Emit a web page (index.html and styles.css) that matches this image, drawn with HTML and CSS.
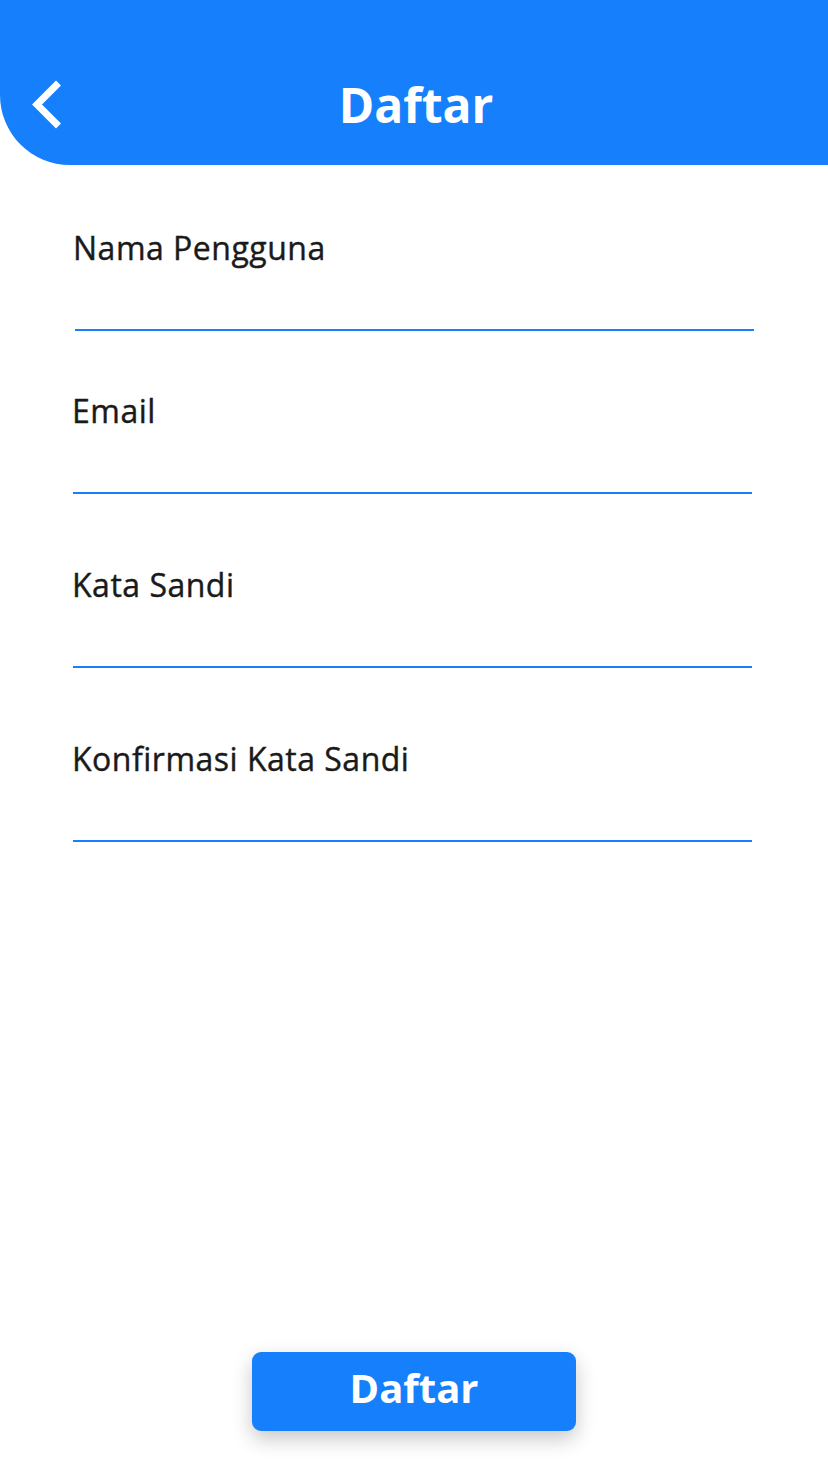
FILE: index.html
```html
<!DOCTYPE html>
<html lang="id">
<head>
<meta charset="utf-8">
<title>Daftar</title>
<link rel="stylesheet" href="styles.css">
</head>
<body>
<div class="screen">
  <header class="appbar">
    <button class="back" aria-label="Kembali">
      <svg width="34" height="52" viewBox="0 0 34 52"><path d="M28.5 4 L7 25.5 L28.5 47" fill="none" stroke="#fff" stroke-width="7" stroke-linecap="butt" stroke-linejoin="miter"/></svg>
    </button>
    <h1 class="title">Daftar</h1>
  </header>
  <form class="form">
    <label class="field first"><span class="label">Nama Pengguna</span><span class="line"></span></label>
    <label class="field second"><span class="label">Email</span><span class="line"></span></label>
    <label class="field"><span class="label">Kata Sandi</span><span class="line"></span></label>
    <label class="field"><span class="label">Konfirmasi Kata Sandi</span><span class="line"></span></label>
  </form>
  <div class="actions">
    <button class="submit" type="button">Daftar</button>
  </div>
</div>
</body>
</html>
```
FILE: styles.css
```css
html, body { margin: 0; padding: 0; background: #fff; }
body { font-family: "Open Sans", "Noto Sans", sans-serif; }
.screen { width: 828px; height: 1472px; display: flex; flex-direction: column; }
.appbar {
  height: 165px; background: #167FFC; border-bottom-left-radius: 70px;
  display: flex; align-items: center; justify-content: center; position: relative;
}
.back {
  position: absolute; left: 30px; top: 79px; padding: 0; margin: 0;
  background: none; border: 0; width: 34px; height: 52px;
}
.back svg { display: block; }
.title { margin: 44px 0 0 4px; color: #fff; font-weight: 700; font-size: 48px; line-height: 1; }
.form { display: flex; flex-direction: column; padding: 0 76px 0 72px; }
.field { display: flex; flex-direction: column; margin-top: 73px; }
.field .line { margin-left: 1px; }
.field.first { margin-top: 65px; padding-left: 1px; margin-right: -2px; }
.field.first .line { margin-left: 2px; }
.field.second { margin-top: 62px; }
.label {
  color: #1a1a1a; font-size: 32px; font-weight: 400; letter-spacing: 0.5px; line-height: 36px;
  -webkit-text-stroke: 0.4px #1a1a1a;
}
.line { display: block; height: 2px; background: #167FFC; margin-top: 63px; }
.actions { margin-top: auto; display: flex; justify-content: center; padding: 0 0 41px 0; }
.submit {
  width: 324px; height: 79px; border: 0; border-radius: 9px; background: #167FFC;
  color: #fff; font-family: "Open Sans", sans-serif; font-weight: 700; font-size: 40px;
  padding: 0 0 7px 0; line-height: 1;
  box-shadow: 0 8px 20px rgba(0,0,0,0.22);
}
```
